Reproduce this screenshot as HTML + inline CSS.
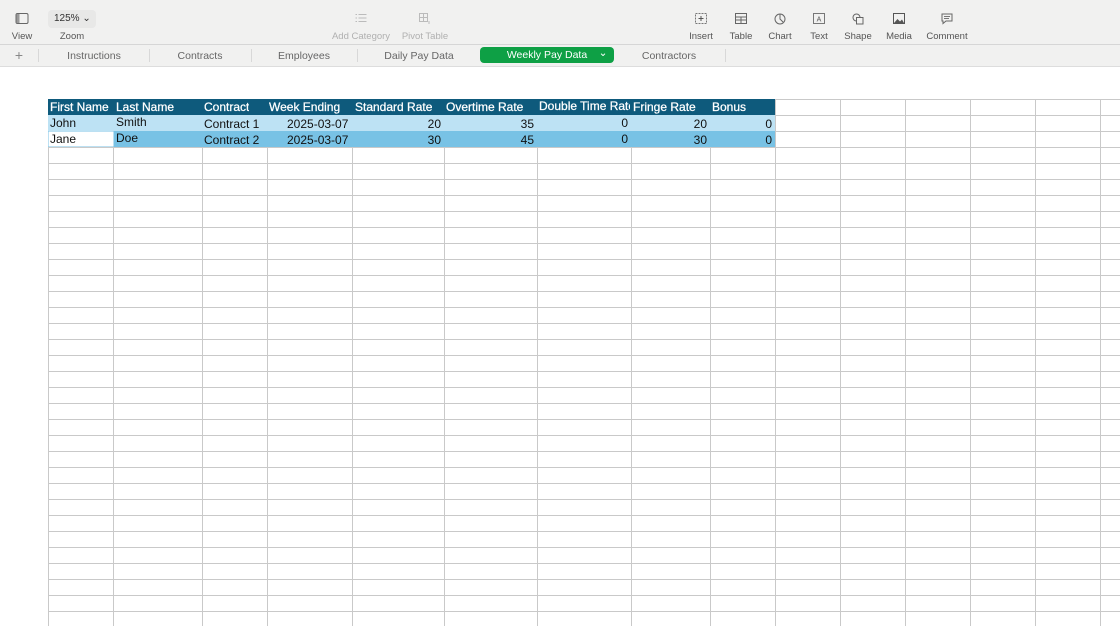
<!DOCTYPE html><html><head><style>
body{margin:0;width:1120px;height:626px;overflow:hidden;background:#fff;font-family:"Liberation Sans",sans-serif;position:relative}
.a{position:absolute}
.tb{left:0;top:0;width:1120px;height:44px;background:#f1f1f0;border-bottom:1px solid #d6d6d6}
.lbl{font-size:9.5px;color:#555;transform:translateX(-50%);top:31px;white-space:nowrap}
.dis{color:#b0b0b0}
.ic{transform:translateX(-50%);top:13px}
.tabs{left:0;top:45px;width:1120px;height:21px;background:#f1f1f0;border-bottom:1px solid #ddd}
.tab{font-size:10.5px;color:#666;top:50px;transform:translateX(-50%);white-space:nowrap}
.sep{top:49px;width:1px;height:13px;background:#d8d8d8}
.c{position:absolute;font-size:12px;line-height:16px;height:16px;white-space:nowrap;overflow:hidden;color:#111}
.h{color:#fff;-webkit-text-stroke:0.25px #fff}
</style></head><body>
<div class="a tb"></div>
<svg class="a ic" style="left:22px" width="13" height="11"><rect x=".5" y=".5" width="12" height="10" rx="1.5" fill="none" stroke="#666"/><rect x="1" y="1" width="3" height="9" fill="#999"/></svg>
<div class="a lbl" style="left:22px">View</div>
<div class="a" style="left:48px;top:10px;width:48px;height:18px;background:#e8e8e7;border-radius:4px;font-size:10px;color:#333;line-height:18px;padding-left:6px;box-sizing:border-box">125% ⌄</div>
<div class="a lbl" style="left:72px">Zoom</div>
<svg class="a ic" style="left:361px" width="11" height="10"><g stroke="#bbb"><path d="M3 1.5h8M3 5h8M3 8.5h8M0 1.5h1.5M0 5h1.5M0 8.5h1.5"/></g></svg>
<div class="a lbl dis" style="left:361px">Add Category</div>
<svg class="a ic" style="left:425px" width="12" height="12"><rect x=".5" y=".5" width="8" height="8" fill="none" stroke="#bbb"/><path d="M4.5 .5v8M.5 4.5h8M10 8v3" stroke="#bbb"/></svg>
<div class="a lbl dis" style="left:425px">Pivot Table</div>
<svg class="a ic" style="left:701px" width="12" height="11"><rect x=".5" y=".5" width="11" height="10" fill="none" stroke="#777" stroke-dasharray="2 1"/><path d="M6 3v5M3.5 5.5h5" stroke="#555"/></svg>
<div class="a lbl" style="left:701px">Insert</div>
<svg class="a ic" style="left:741px" width="12" height="11"><rect x=".5" y=".5" width="11" height="10" fill="none" stroke="#666"/><path d="M.5 4h11M.5 7h11M6 4v7" stroke="#666"/></svg>
<div class="a lbl" style="left:741px">Table</div>
<svg class="a ic" style="left:780px" width="12" height="12"><circle cx="6" cy="6" r="5" fill="none" stroke="#666"/><path d="M6 1v5l3 3" stroke="#666" fill="none"/></svg>
<div class="a lbl" style="left:780px">Chart</div>
<svg class="a ic" style="left:819px" width="12" height="11"><rect x=".5" y=".5" width="11" height="10" fill="none" stroke="#777"/><text x="6" y="8.5" font-size="7" text-anchor="middle" fill="#555" font-family="Liberation Sans">A</text></svg>
<div class="a lbl" style="left:819px">Text</div>
<svg class="a ic" style="left:858px" width="12" height="12"><circle cx="4.5" cy="4.5" r="3.5" fill="none" stroke="#666"/><rect x="4.5" y="4.5" width="6.5" height="6.5" fill="#f1f1f0" stroke="#666"/></svg>
<div class="a lbl" style="left:858px">Shape</div>
<svg class="a ic" style="left:899px" width="12" height="11"><rect x=".5" y=".5" width="11" height="10" fill="none" stroke="#555"/><path d="M1 10l3.5-4 2.5 2.5 2-2 2 3.5z" fill="#555"/></svg>
<div class="a lbl" style="left:899px">Media</div>
<svg class="a ic" style="left:947px" width="12" height="12"><path d="M1 1h10v7H5l-3 2.5V8H1z" fill="none" stroke="#666"/><path d="M3 3.5h6M3 5.5h5" stroke="#777"/></svg>
<div class="a lbl" style="left:947px">Comment</div>

<div class="a tabs"></div>
<div class="a tab" style="left:19px;font-size:14px;top:47px;color:#888">+</div>
<div class="a sep" style="left:38px"></div>
<div class="a tab" style="left:94px">Instructions</div>
<div class="a sep" style="left:149px"></div>
<div class="a tab" style="left:200px">Contracts</div>
<div class="a sep" style="left:251px"></div>
<div class="a tab" style="left:304px">Employees</div>
<div class="a sep" style="left:357px"></div>
<div class="a tab" style="left:419px">Daily Pay Data</div>
<div class="a" style="left:480px;top:47px;width:134px;height:16px;background:#0ea045;border-radius:4px"></div>
<div class="a tab" style="left:547px;color:#fff;top:49px">Weekly Pay Data</div>
<div class="a tab" style="left:603px;color:#fff;top:47px">⌄</div>
<div class="a tab" style="left:669px">Contractors</div>
<div class="a sep" style="left:725px"></div>

<svg class="a" style="left:0;top:0" width="1120" height="626">
<rect x="48" y="99" width="727" height="16" fill="#0e5a7c"/>
<rect x="48" y="115" width="727" height="16" fill="#bde2f4"/>
<rect x="48" y="131" width="727" height="16" fill="#78c2e5"/>
<rect x="48.5" y="131.5" width="65" height="15" fill="#fff"/>
<g stroke="#c9c9c9" stroke-width="1">
<path d="M775.5 99V626M840.5 99V626M905.5 99V626M970.5 99V626M1035.5 99V626M1100.5 99V626M775 99.5H1120M775 115.5H1120M775 131.5H1120"/>
<path d="M48.5 147V626M113.5 147V626M202.5 147V626M267.5 147V626M352.5 147V626M444.5 147V626M537.5 147V626M631.5 147V626M710.5 147V626"/>
<path d="M48 147.5H1120M48 163.5H1120M48 179.5H1120M48 195.5H1120M48 211.5H1120M48 227.5H1120M48 243.5H1120M48 259.5H1120M48 275.5H1120M48 291.5H1120M48 307.5H1120M48 323.5H1120M48 339.5H1120M48 355.5H1120M48 371.5H1120M48 387.5H1120M48 403.5H1120M48 419.5H1120M48 435.5H1120M48 451.5H1120M48 467.5H1120M48 483.5H1120M48 499.5H1120M48 515.5H1120M48 531.5H1120M48 547.5H1120M48 563.5H1120M48 579.5H1120M48 595.5H1120M48 611.5H1120"/>
</g>
</svg>
<div class="c h" style="left:50px;top:99px">First Name</div>
<div class="c h" style="left:116px;top:99px">Last Name</div>
<div class="c h" style="left:204px;top:99px">Contract</div>
<div class="c h" style="left:269px;top:99px">Week Ending</div>
<div class="c h" style="left:355px;top:99px">Standard Rate</div>
<div class="c h" style="left:446px;top:99px">Overtime Rate</div>
<div class="c h" style="left:539px;top:98px;width:91px">Double Time Rate</div>
<div class="c h" style="left:633px;top:99px">Fringe Rate</div>
<div class="c h" style="left:712px;top:99px">Bonus</div>

<div class="c" style="left:50px;top:115px">John</div>
<div class="c" style="left:116px;top:114px">Smith</div>
<div class="c" style="left:204px;top:116px">Contract 1</div>
<div class="c" style="left:287px;top:116px">2025-03-07</div>
<div class="c" style="left:352px;top:116px;width:89px;text-align:right">20</div>
<div class="c" style="left:444px;top:116px;width:90px;text-align:right">35</div>
<div class="c" style="left:537px;top:115px;width:91px;text-align:right">0</div>
<div class="c" style="left:631px;top:116px;width:76px;text-align:right">20</div>
<div class="c" style="left:710px;top:116px;width:62px;text-align:right">0</div>

<div class="c" style="left:50px;top:131px">Jane</div>
<div class="c" style="left:116px;top:130px">Doe</div>
<div class="c" style="left:204px;top:132px">Contract 2</div>
<div class="c" style="left:287px;top:132px">2025-03-07</div>
<div class="c" style="left:352px;top:132px;width:89px;text-align:right">30</div>
<div class="c" style="left:444px;top:132px;width:90px;text-align:right">45</div>
<div class="c" style="left:537px;top:131px;width:91px;text-align:right">0</div>
<div class="c" style="left:631px;top:132px;width:76px;text-align:right">30</div>
<div class="c" style="left:710px;top:132px;width:62px;text-align:right">0</div>
</body></html>
